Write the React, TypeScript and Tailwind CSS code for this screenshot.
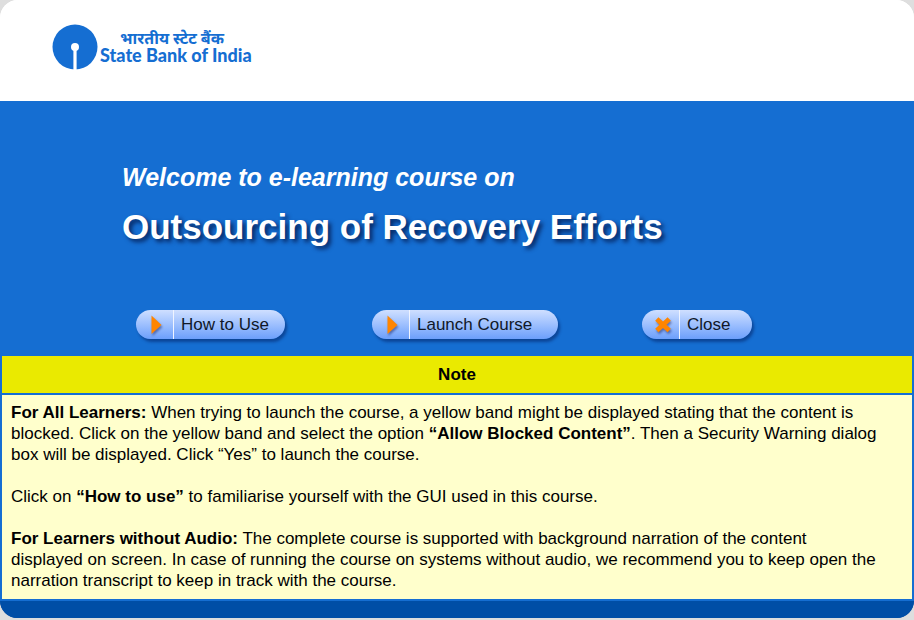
import type { ReactNode } from "react";

function BankLogo() {
  return (
    <div className="flex items-center gap-[2px] text-[#156ed2]">
      <svg className="h-[46px] w-[46px]" viewBox="0 0 46 46" aria-hidden="true">
        <circle cx="23" cy="23" r="22.5" fill="#156ed2" />
        <circle cx="23" cy="23" r="4" fill="#fff" />
        <rect x="21.4" y="25" width="3.2" height="21" fill="#fff" />
      </svg>
      <div className="whitespace-nowrap font-['Lato','Noto_Sans',sans-serif] font-black">
        <div className="pl-5 text-base leading-4 font-bold">भारतीय स्टेट बैंक</div>
        <div className="text-[18px] leading-[18px]">State Bank of India</div>
      </div>
    </div>
  );
}

function PlayIcon() {
  return (
    <svg className="h-5 w-3 drop-shadow-[1px_2px_1px_rgba(0,0,60,0.4)]" viewBox="0 0 12 20" aria-hidden="true">
      <path d="M0.5 0.5 L10.5 10 L0.5 19 Z" fill="#ff8500" />
    </svg>
  );
}

function CrossIcon() {
  return (
    <svg className="h-4 w-4 drop-shadow-[1px_2px_1px_rgba(0,0,60,0.4)]" viewBox="0 0 16 16" aria-hidden="true">
      <path d="M1.8 2 L14.2 13.5 M14.2 2 L1.8 13.5" stroke="#ff8500" strokeWidth="4.8" />
    </svg>
  );
}

function PillButton({ icon, width, children }: { icon: ReactNode; width: string; children: ReactNode }) {
  return (
    <button
      type="button"
      className={`${width} flex h-[29px] items-stretch overflow-hidden rounded-full bg-linear-to-b from-[#cfdfff] to-[#6c9ffb] text-[17px] text-[#101828] shadow-[2px_3px_3px_rgba(0,20,80,0.45)]`}
    >
      <span className="flex w-[38px] shrink-0 items-center justify-center border-r border-[#f0f4ff] pl-1">{icon}</span>
      <span className="flex items-center pl-[7px] whitespace-nowrap">{children}</span>
    </button>
  );
}

export default function App() {
  return (
    <div className="min-h-screen bg-[#dedede] pb-[2px] font-['Liberation_Sans',Arial,sans-serif]">
      <div className="rounded-[18px] bg-linear-to-b from-white from-50% to-[#004ea6] to-50%">
        <header className="rounded-t-[18px] bg-white pt-6 pb-[31px] pl-[52px]">
          <BankLogo />
        </header>

        <main className="bg-[#156ed2]">
          <section className="pt-[60px] pb-[17px] text-white">
            <div className="pl-[122px]">
              <p className="text-[25px] leading-8 font-bold italic">Welcome to e-learning course on</p>
              <h1 className="mt-[13px] text-[35px] leading-[42px] font-bold [text-shadow:3px_3px_4px_rgba(0,15,60,0.75)]">
                Outsourcing of Recovery Efforts
              </h1>
            </div>
            <nav className="mt-[62px] flex pl-[136px]">
              <PillButton width="w-[149px]" icon={<PlayIcon />}>
                How to Use
              </PillButton>
              <div className="ml-[87px]">
                <PillButton width="w-[186px]" icon={<PlayIcon />}>
                  Launch Course
                </PillButton>
              </div>
              <div className="ml-[84px]">
                <PillButton width="w-[110px]" icon={<CrossIcon />}>
                  Close
                </PillButton>
              </div>
            </nav>
          </section>

          <section className="px-[2px] pb-[2px] text-[17px] leading-[21px] text-black">
            <h2 className="mb-[2px] bg-[#eaea00] py-2 text-center font-bold">Note</h2>
            <div className="bg-[#ffffcc] pt-[7px] pr-[31px] pb-2 pl-[9px]">
              <p>
                <b>For All Learners:</b> When trying to launch the course, a yellow band might be displayed stating
                that the content is blocked. Click on the yellow band and select the option{" "}
                <b>“Allow Blocked Content”</b>. Then a Security Warning dialog box will be displayed. Click “Yes” to
                launch the course.
              </p>
              <p className="mt-[21px]">
                Click on <b>“How to use”</b> to familiarise yourself with the GUI used in this course.
              </p>
              <p className="mt-[21px]">
                <b>For Learners without Audio:</b> The complete course is supported with background narration of the
                content displayed on screen. In case of running the course on systems without audio, we recommend you
                to keep open the narration transcript to keep in track with the course.
              </p>
            </div>
          </section>
        </main>

        <footer className="h-[17px] rounded-b-[18px] bg-[#004ea6]" />
      </div>
    </div>
  );
}
